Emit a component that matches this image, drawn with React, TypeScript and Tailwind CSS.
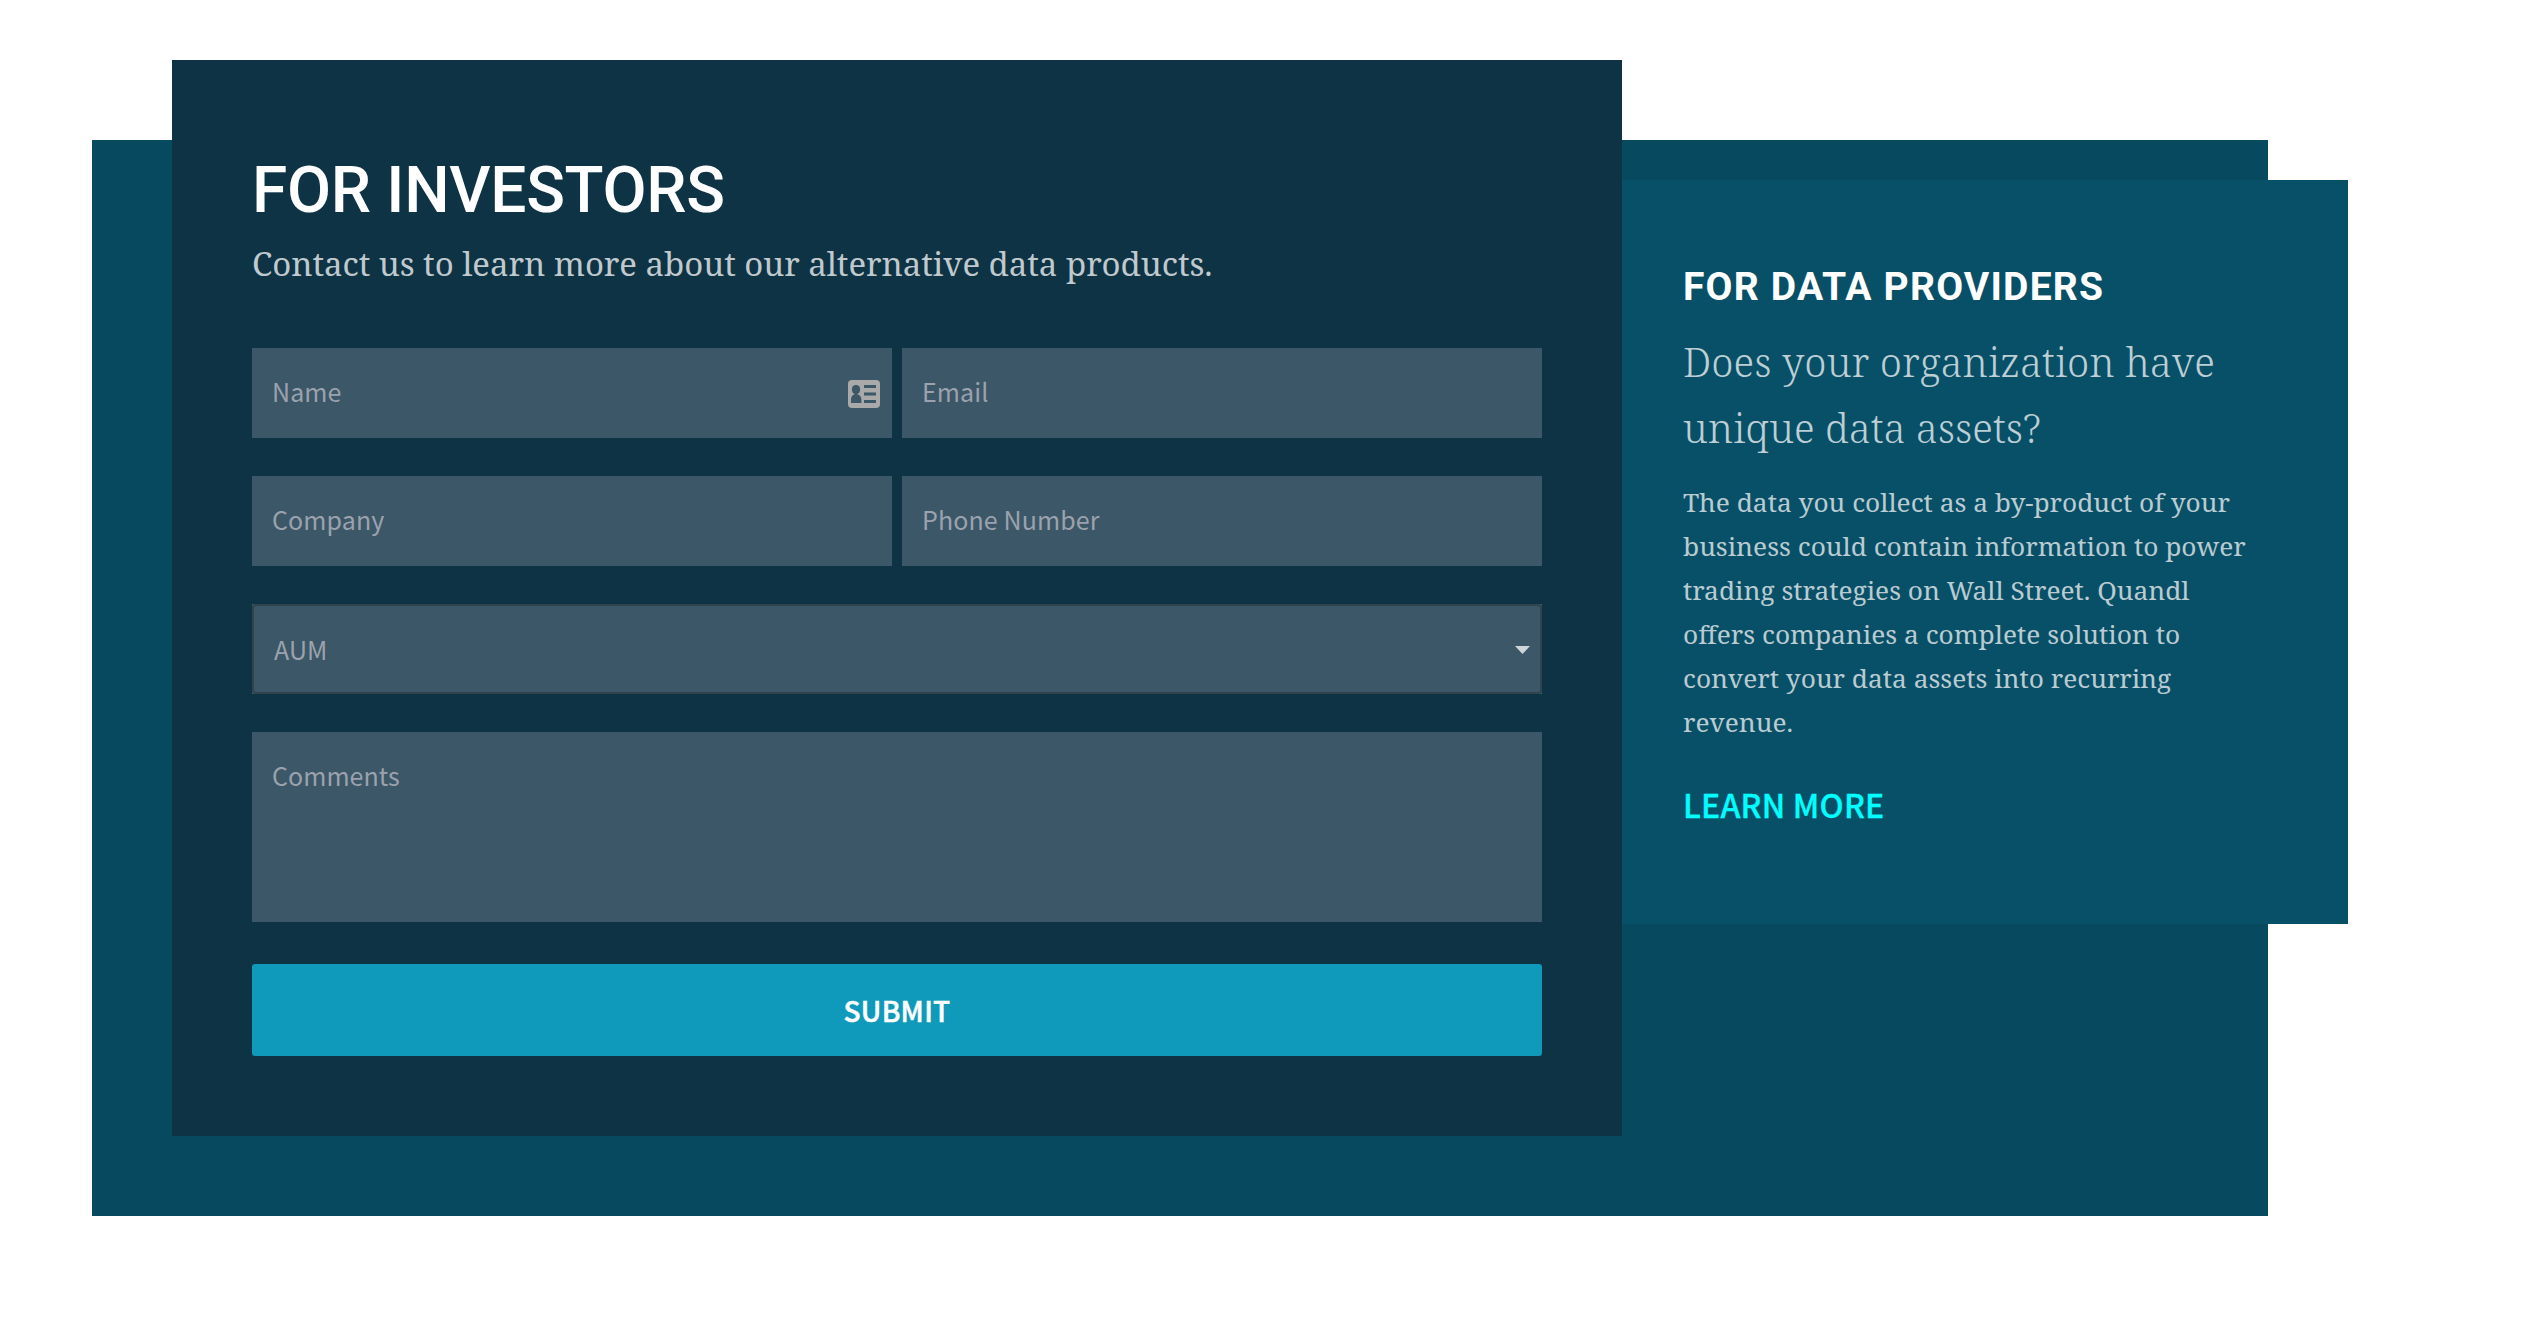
import React from "react";

const SANS = "font-['Noto_Sans_CJK_SC',sans-serif]";

type FieldProps = { label: string; name: string; icon?: React.ReactNode };

function Field({ label, name, icon }: FieldProps) {
  return (
    <label className="relative flex h-[90px] items-center justify-between bg-[#3b5768] pr-3 pl-5">
      <span className={`${SANS} pb-1 text-[25px] leading-9 tracking-[0.1px] text-[#9ba2ad]`}>{label}</span>
      {icon}
      <input name={name} className="absolute inset-0 bg-transparent outline-none" />
    </label>
  );
}

function ContactCardIcon() {
  return (
    <svg className="mt-[2px] h-7 w-8" viewBox="0 0 32 28" aria-hidden="true">
      <rect width="32" height="28" rx="4" fill="#a9a9a9" />
      <g fill="#3b5768">
        <rect x="4" y="5" width="8" height="9" rx="4" />
        <path d="M6.600 12h2.800v2.200c2.600.7 4 2.700 4 5.600v3.200H3v-3.200c0-2.900 1.200-4.900 3.600-5.600z" />
        <rect x="16" y="5" width="12" height="3" />
        <rect x="16" y="12.500" width="12" height="3" />
        <rect x="16" y="20" width="12" height="3" />
      </g>
    </svg>
  );
}

function InvestorForm() {
  return (
    <form className="-mt-20 ml-20 h-[1076px] w-[1450px] shrink-0 bg-[#0d3344] px-20 pt-[91px]">
      <header className="h-[197px]">
        <h2 className="font-[Roboto,sans-serif] text-[64px] leading-[80px] font-medium tracking-[-0.3px] text-white">
          FOR INVESTORS
        </h2>
        <p className="mt-[7px] font-['Noto_Serif',serif] text-[33px] leading-[52px] tracking-[-0.05px] whitespace-nowrap text-[#c0c9ce]">
          Contact us to learn more about our alternative data products.
        </p>
      </header>

      <div className="grid grid-cols-2 gap-x-[10px] gap-y-[38px]">
        <Field label="Name" name="name" icon={<ContactCardIcon />} />
        <Field label="Email" name="email" />
        <Field label="Company" name="company" />
        <Field label="Phone Number" name="phone" />

        <button
          type="button"
          className="col-span-2 flex h-[90px] items-center justify-between bg-[#3b5768] text-left"
        >
          <span className="flex h-full w-full items-center justify-between rounded-[4px] border-2 border-[#30444e] pr-[10px] pl-5">
            <span className={`${SANS} text-[25px] leading-9 tracking-[0.1px] text-[#9ba2ad]`}>AUM</span>
            <svg className="mt-0.5 h-2 w-[15px]" viewBox="0 0 15 8" aria-hidden="true">
              <path d="M0 0h15L7.500 8z" fill="#cfd6db" />
            </svg>
          </span>
        </button>

        <label className="relative col-span-2 h-[190px] bg-[#3b5768] px-5 pt-[25px]">
          <span className={`${SANS} block text-[25px] leading-9 tracking-[0.05px] text-[#9ba2ad]`}>Comments</span>
          <textarea name="comments" className="absolute inset-0 resize-none bg-transparent outline-none" />
        </label>
      </div>

      <button
        type="submit"
        className={`${SANS} mt-[42px] h-[92px] w-full rounded-[3px] bg-[#0f99ba] text-[28px] leading-10 font-medium tracking-[0.3px] text-white [-webkit-text-stroke:0.5px_white]`}
      >
        SUBMIT
      </button>
    </form>
  );
}

function DataProviders() {
  return (
    <aside className="mt-10 h-[744px] w-[726px] shrink-0 bg-[#085067] pt-[82px] pl-[61px]">
      <h3 className="font-[Roboto,sans-serif] text-[39px] leading-[50px] font-bold tracking-[1.2px] text-white">
        FOR DATA PROVIDERS
      </h3>
      <p className="mt-[17px] font-['Noto_Serif',serif] text-[40px] leading-[66px] font-light tracking-[0.08px] text-[#bdced5]">
        Does your organization have
        <br />
        unique data assets?
      </p>
      <p className="mt-[19px] font-['Noto_Serif',serif] text-[26.3px] leading-[44px] text-[#bacbd2]">
        The data you collect as a by-product of your
        <br />
        business could contain information to power
        <br />
        trading strategies on Wall Street. Quandl
        <br />
        offers companies a complete solution to
        <br />
        convert your data assets into recurring
        <br />
        revenue.
      </p>
      <a
        href="#learn-more"
        className={`${SANS} mt-9 block text-[32px] leading-[48px] font-medium tracking-[0.2px] text-[#00ffff] [-webkit-text-stroke:0.3px_#00ffff]`}
      >
        LEARN MORE
      </a>
    </aside>
  );
}

export default function App() {
  return (
    <main className="flow-root h-[1324px] w-full overflow-hidden bg-white">
      <section className="mt-[140px] ml-[92px] flex h-[1076px] w-[2176px] items-start bg-[#074a60]">
        <InvestorForm />
        <DataProviders />
      </section>
    </main>
  );
}
